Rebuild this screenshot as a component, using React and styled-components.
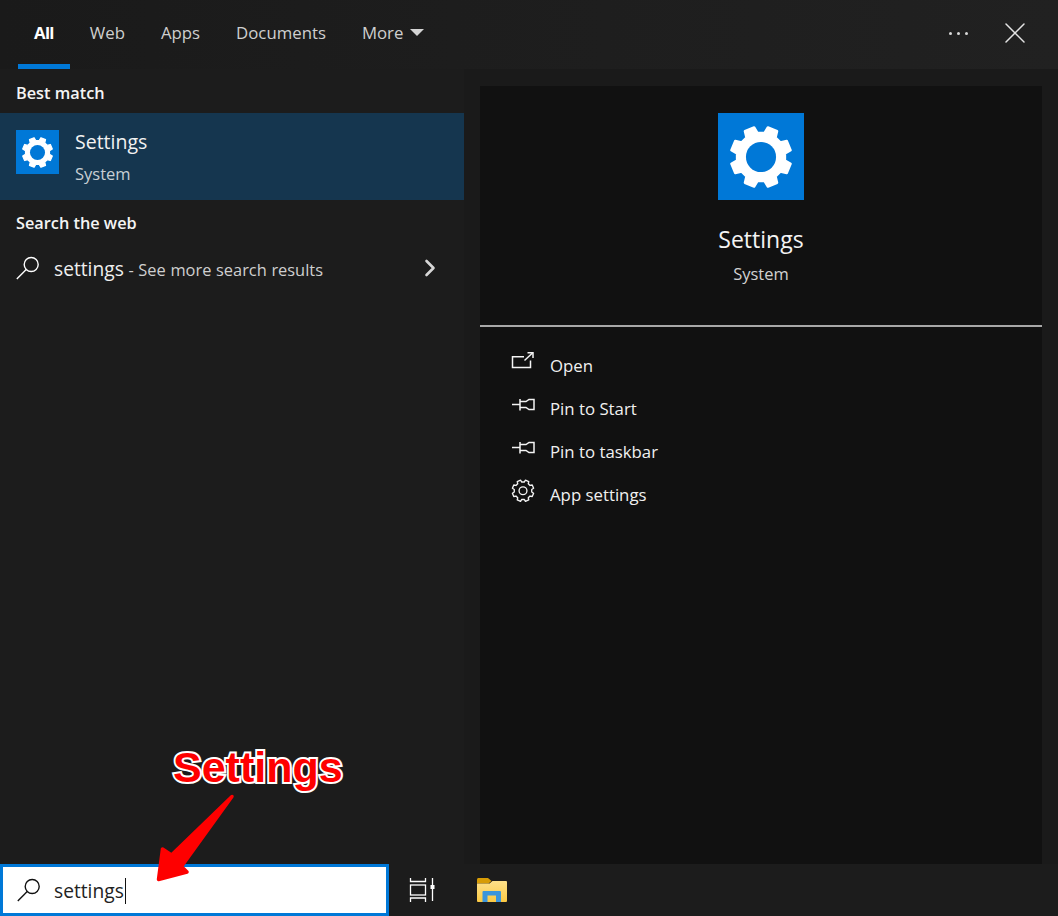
import React from 'react'
import styled, { createGlobalStyle } from 'styled-components'
import { ChevronRight, X } from 'lucide-react'

const Global = createGlobalStyle`
    html, body {
        margin: 0;
        padding: 0;
        background: #1c1c1c;
    }
    * {
        box-sizing: border-box;
    }
`

const gearPath = (outer, inner, teeth = 8) => {
    const points = []
    const step = (Math.PI * 2) / teeth
    for (let i = 0; i < teeth; i++) {
        const mid = step * i + step / 2
        const angles = [
            [mid - step * 0.32, inner],
            [mid - step * 0.21, outer],
            [mid + step * 0.21, outer],
            [mid + step * 0.32, inner],
        ]
        angles.forEach(([a, r]) => {
            points.push(`${(Math.cos(a) * r + 32).toFixed(2)} ${(Math.sin(a) * r + 32).toFixed(2)}`)
        })
    }
    return `M${points.join('L')}Z`
}

const SolidGear = ({ size }) => (
    <svg width={size} height={size} viewBox="0 0 64 64">
        <path
            d={gearPath(22.6, 18)}
            fill="#fff"
            stroke="#fff"
            strokeWidth="1.8"
            strokeLinejoin="round"
        />
        <circle cx="32" cy="32" r="11.2" fill="#0078d7" />
    </svg>
)

const SearchGlass = ({ color }) => (
    <svg width="24" height="24" viewBox="0 0 24 24" fill="none" stroke={color} strokeWidth="1.4">
        <circle cx="15.2" cy="8.5" r="7" />
        <path d="M10.2 13.5 L.8 23" />
    </svg>
)

const OpenIcon = () => (
    <svg width="24" height="20" viewBox="0 0 24 20" fill="none" stroke="#f4f4f4" strokeWidth="1.5">
        <path d="M13 5.7H1.5V16.500H19.500V9.500" />
        <path d="M13.500 9.500L21.500 2" />
        <path d="M16.500 1.700H22V7" />
    </svg>
)

const PinIcon = () => (
    <svg width="24" height="20" viewBox="0 0 24 20" fill="none" stroke="#f4f4f4" strokeWidth="1.5">
        <path d="M1 10.500H9" />
        <path d="M9 5V16.500" />
        <path d="M9 7.500H15L18 5.500H23V15.500H18L15 13.500H9" />
    </svg>
)

const OutlineGear = () => (
    <svg width="24" height="24" viewBox="0 -2 64 64" fill="none" stroke="#f4f4f4" strokeWidth="3.600" strokeLinejoin="round">
        <path d={gearPath(29, 23.500)} />
        <circle cx="32" cy="32" r="10.500" />
    </svg>
)

const TaskViewIcon = () => (
    <svg width="26" height="24" viewBox="0 0 26 24" fill="none" stroke="#fff" strokeWidth="1.300">
        <path d="M1.500 0V3.500H16.500V0" />
        <path d="M1.500 24V20H16.500V24" />
        <rect x="1.500" y="7" width="15" height="10" />
        <path d="M23.500 0V7M23.500 11V23" />
        <rect x="21.500" y="7" width="4" height="4" fill="#fff" stroke="none" />
    </svg>
)

const FolderIcon = () => (
    <svg width="30" height="24" viewBox="0 0 30 24">
        <defs>
            <linearGradient id="folderBody" x1="0" y1="0" x2="0" y2="1">
                <stop offset="0" stopColor="#fde08a" />
                <stop offset="1" stopColor="#fbc943" />
            </linearGradient>
        </defs>
        <path d="M0 1.500C0 .7.7 0 1.500 0H11L14.500 3 11.500 5.500H0z" fill="#d79c06" />
        <path d="M0 5.500H12.500L15.500 3H29a1 1 0 0 1 1 1V23a1 1 0 0 1-1 1H1a1 1 0 0 1-1-1z" fill="url(#folderBody)" />
        <path d="M5.500 24V14a1 1 0 0 1 1-1H23a1 1 0 0 1 1 1V24H19V17.500H10.500V24z" fill="#3b95dc" />
    </svg>
)

const tabs = ['All', 'Web', 'Apps', 'Documents', 'More']

const actions = [
    { label: 'Open', icon: <OpenIcon /> },
    { label: 'Pin to Start', icon: <PinIcon /> },
    { label: 'Pin to taskbar', icon: <PinIcon /> },
    { label: 'App settings', icon: <OutlineGear /> },
]

export default function App() {
    return (
        <Page>
            <Global />
            <TopBar>
                <Tabs>
                    {tabs.map(tab => (
                        <Tab key={tab} $active={tab === 'All'}>
                            {tab}
                            {tab === 'More' && <Caret />}
                        </Tab>
                    ))}
                </Tabs>
                <WindowButtons>
                    <Dots><i /><i /><i /></Dots>
                    <X size={36} strokeWidth={1.5} color="#e4e4e4" absoluteStrokeWidth />
                </WindowButtons>
            </TopBar>
            <Body>
                <LeftPanel>
                    <SectionTitle>Best match</SectionTitle>
                    <MatchRow>
                        <AppTile $size={43}><SolidGear size={43} /></AppTile>
                        <MatchText>
                            <MatchName>Settings</MatchName>
                            <MatchKind>System</MatchKind>
                        </MatchText>
                    </MatchRow>
                    <SectionTitle $web>Search the web</SectionTitle>
                    <WebRow>
                        <SearchGlass color="#fff" />
                        <WebText>settings<WebHint> - See more search results</WebHint></WebText>
                        <ChevronRight size={28} strokeWidth={2.6} color="#d6d6d6" absoluteStrokeWidth />
                    </WebRow>
                </LeftPanel>
                <RightGutter>
                    <DetailPanel>
                        <DetailHead>
                            <AppTile $size={86}><SolidGear size={86} /></AppTile>
                            <DetailName>Settings</DetailName>
                            <DetailKind>System</DetailKind>
                        </DetailHead>
                        <ActionList>
                            {actions.map(action => (
                                <ActionRow key={action.label}>
                                    <ActionIcon>{action.icon}</ActionIcon>
                                    {action.label}
                                </ActionRow>
                            ))}
                        </ActionList>
                    </DetailPanel>
                </RightGutter>
            </Body>
            <Taskbar>
                <SearchBox>
                    <SearchGlass color="#111" />
                    <SearchValue>settings</SearchValue>
                </SearchBox>
                <TaskButton $width={66}><TaskViewIcon /></TaskButton>
                <TaskButton $width={73}><FolderIcon /></TaskButton>
            </Taskbar>
            <CalloutLabel>Settings</CalloutLabel>
            <CalloutArrow width="90" height="100" viewBox="0 0 90 100">
                <path
                    d="M82 6.500L21.500 65L12.500 59L8.500 89.500L37 82L31.500 76.500Z"
                    fill="#fe0000"
                    stroke="#fe0000"
                    strokeWidth="3.500"
                    strokeLinejoin="round"
                />
            </CalloutArrow>
        </Page>
    )
}

const Page = styled.div`
    position: relative;
    display: flex;
    flex-direction: column;
    width: 1058px;
    height: 916px;
    overflow: hidden;
    font-family: "Open Sans", "Noto Sans", sans-serif;
    color: #fff;
`

const TopBar = styled.header`
    display: flex;
    justify-content: space-between;
    flex: 0 0 69px;
    padding-left: 18px;
    background: linear-gradient(90deg, #1a1a1a, #212121);
`

const Tabs = styled.nav`
    display: flex;
    gap: 4px;
`

const Tab = styled.div`
    display: flex;
    align-items: center;
    gap: 7px;
    height: 69px;
    padding: 0 16px;
    font-size: 16.8px;
    font-weight: ${p => (p.$active ? 700 : 400)};
    letter-spacing: ${p => (p.$active ? '-0.7px' : '0')};
    color: ${p => (p.$active ? '#fff' : '#cfcfcf')};
    border-bottom: 5px solid ${p => (p.$active ? '#0078d7' : 'transparent')};
`

const Caret = styled.span`
    width: 0;
    height: 0;
    border-left: 7px solid transparent;
    border-right: 7px solid transparent;
    border-top: 7px solid #d4d4d4;
`

const WindowButtons = styled.div`
    display: flex;
    align-items: center;
    gap: 29px;
    padding: 0 25px 3px 0;
`

const Dots = styled.div`
    display: flex;
    gap: 5px;
    i {
        width: 3px;
        height: 3px;
        border-radius: 50%;
        background: #d8d8d8;
    }
`

const Body = styled.main`
    display: flex;
    flex: 1;
    min-height: 0;
`

const LeftPanel = styled.section`
    flex: 0 0 464px;
    background: #1c1c1c;
`

const SectionTitle = styled.h2`
    margin: 0;
    height: ${p => (p.$web ? '46px' : '44px')};
    padding: ${p => (p.$web ? '12px' : '13px')} 16px 0;
    font-size: 16.3px;
    line-height: 23px;
    font-weight: 600;
    color: #f4f4f4;
`

const MatchRow = styled.div`
    display: flex;
    gap: 16px;
    height: 87px;
    padding: 17px 16px 0;
    background: #15364f;
`

const AppTile = styled.div`
    display: flex;
    flex: 0 0 auto;
    width: ${p => p.$size}px;
    height: ${p => p.$size + 1}px;
    align-items: center;
    background: #0078d7;
`

const MatchText = styled.div`
    display: flex;
    flex-direction: column;
    gap: 8px;
    margin-top: -1px;
`

const MatchName = styled.div`
    font-size: 19.5px;
    line-height: 26px;
    color: #f2f2f2;
`

const MatchKind = styled.div`
    font-size: 16.5px;
    line-height: 22px;
    color: #c8cfd4;
`

const WebRow = styled.div`
    display: flex;
    align-items: center;
    height: 44px;
    padding: 0 20px 0 16px;
`

const WebText = styled.div`
    flex: 1;
    margin-left: 14px;
    font-size: 19.2px;
    color: #efefef;
`

const WebHint = styled.span`
    font-size: 16.4px;
    word-spacing: 0.4px;
    color: #cfcfcf;
`

const RightGutter = styled.section`
    flex: 1;
    padding: 17px 16px 0;
    background: #1a1a1a;
`

const DetailPanel = styled.div`
    height: 100%;
    background: #111;
`

const DetailHead = styled.div`
    display: flex;
    flex-direction: column;
    align-items: center;
    height: 241px;
    padding-top: 27px;
    border-bottom: 2px solid #a8a8a8;
`

const DetailName = styled.div`
    margin-top: 23px;
    font-size: 23px;
    line-height: 32px;
    color: #f4f4f4;
`

const DetailKind = styled.div`
    margin-top: 7px;
    font-size: 16.5px;
    line-height: 24px;
    color: #d2d2d2;
`

const ActionList = styled.ul`
    margin: 0;
    padding: 17px 0 0 31px;
    list-style: none;
`

const ActionRow = styled.li`
    display: flex;
    align-items: center;
    height: 43px;
    font-size: 16.8px;
    color: #f0f0f0;
`

const ActionIcon = styled.span`
    display: flex;
    width: 39px;
    margin-top: -9px;
`

const Taskbar = styled.footer`
    display: flex;
    flex: 0 0 52px;
    background: #1c1c1c;
`

const SearchBox = styled.div`
    display: flex;
    align-items: center;
    width: 389px;
    padding: 0 0 0 14px;
    background: #fff;
    border: 3px solid #0078d7;
`

const SearchValue = styled.div`
    margin: 2px 0 0 13px;
    padding-right: 1px;
    font-size: 19.2px;
    line-height: 26px;
    color: #222;
    border-right: 1px solid #111;
`

const TaskButton = styled.div`
    display: flex;
    align-items: center;
    justify-content: center;
    width: ${p => p.$width}px;
`

const CalloutLabel = styled.div`
    position: absolute;
    left: 173px;
    top: 742px;
    font-family: "Liberation Sans", Arial, sans-serif;
    font-size: 43px;
    line-height: 50px;
    font-weight: 700;
    color: #fe0000;
    -webkit-text-stroke: 4px #fff;
    paint-order: stroke fill;
`

const CalloutArrow = styled.svg`
    position: absolute;
    left: 150px;
    top: 790px;
`
